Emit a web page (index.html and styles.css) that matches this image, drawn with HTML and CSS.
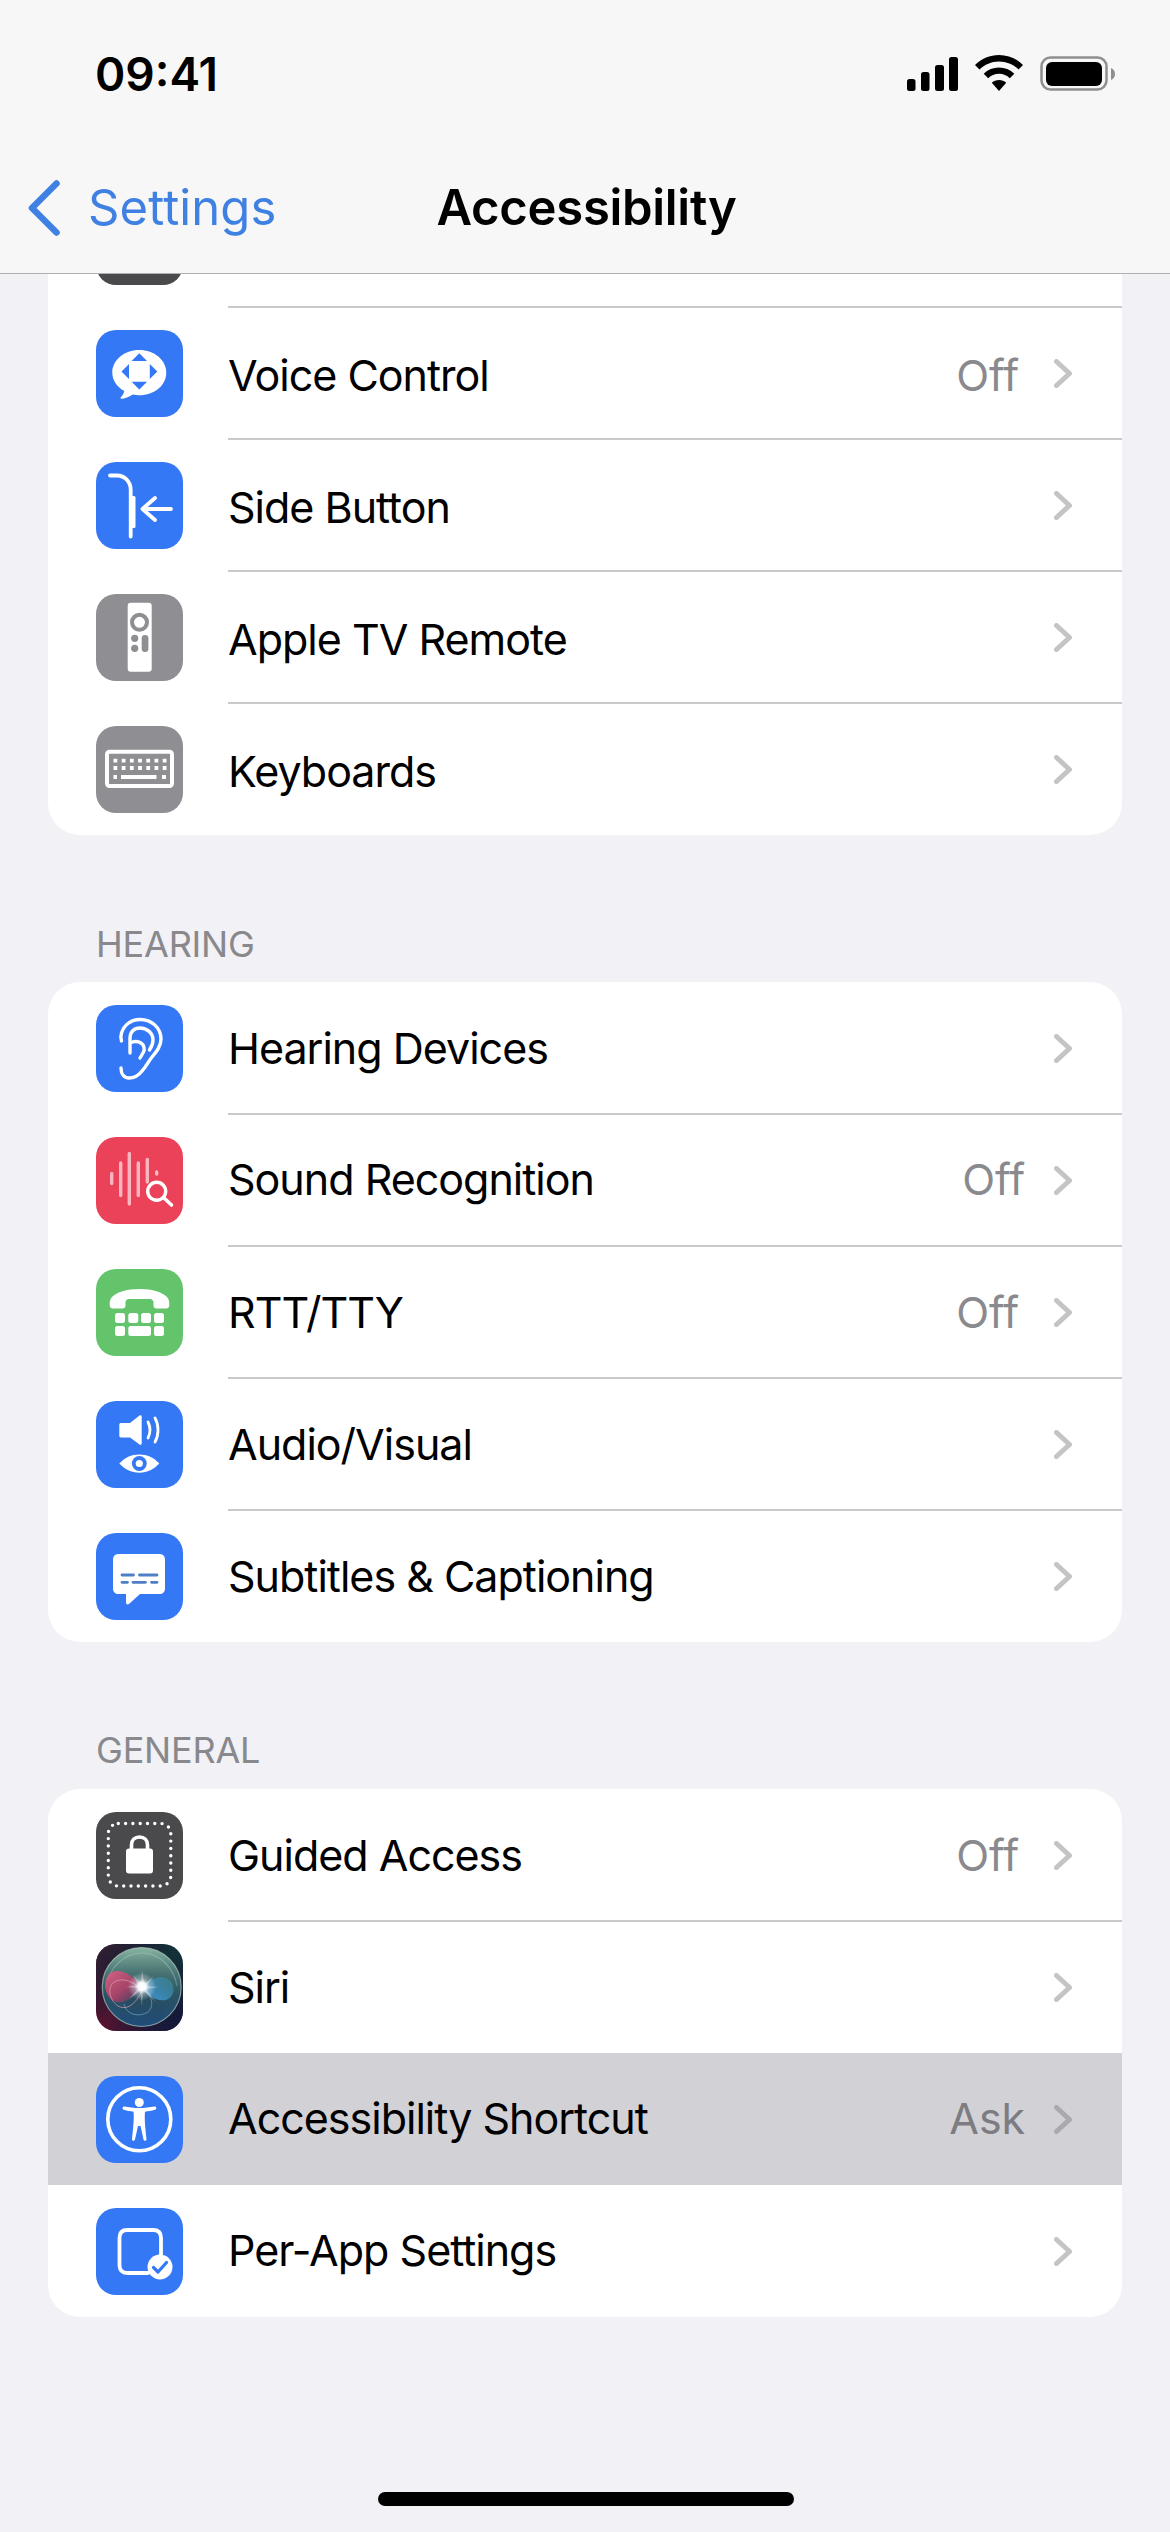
FILE: index.html
```html
<!DOCTYPE html>
<html lang="en">
<head>
<meta charset="utf-8">
<title>Accessibility</title>
<link rel="stylesheet" href="styles.css">
</head>
<body>
<svg class="defs" width="0" height="0" aria-hidden="true">
  <defs>
    <symbol id="chev" viewBox="0 0 18 29"><path d="M2.500 2.500 15.500 14.500 2.500 26.500" fill="none" stroke="currentColor" stroke-width="5" stroke-linecap="round" stroke-linejoin="round"/></symbol>
    <radialGradient id="siriGlow"><stop offset="0" stop-color="#fff"/><stop offset=".28" stop-color="#fff" stop-opacity=".96"/><stop offset=".55" stop-color="#e6f0f6" stop-opacity=".4"/><stop offset="1" stop-color="#fff" stop-opacity="0"/></radialGradient>
    <linearGradient id="siriPink" x1="0" y1="0" x2="1" y2="1"><stop offset="0" stop-color="#d86384" stop-opacity=".95"/><stop offset=".55" stop-color="#b83f69" stop-opacity=".85"/><stop offset="1" stop-color="#6d3a66" stop-opacity=".35"/></linearGradient>
    <linearGradient id="siriBlue" x1="1" y1="0" x2="0" y2="1"><stop offset="0" stop-color="#3d8c9e" stop-opacity=".55"/><stop offset="1" stop-color="#3f97e0" stop-opacity=".95"/></linearGradient>
    <radialGradient id="siriBall" cx=".5" cy=".5" r=".55"><stop offset="0" stop-color="#2b4a58"/><stop offset=".7" stop-color="#2d5560"/><stop offset="1" stop-color="#2a5a68"/></radialGradient>
    <linearGradient id="siriSheen" x1="0" y1="0" x2="0" y2="1"><stop offset="0" stop-color="#9cc7ae" stop-opacity=".85"/><stop offset=".5" stop-color="#5d9484" stop-opacity=".15"/><stop offset=".6" stop-color="#1a3f70" stop-opacity=".1"/><stop offset="1" stop-color="#1c4a80" stop-opacity=".8"/></linearGradient>
    <linearGradient id="siriBg" x1="0" y1="1" x2="1" y2="0"><stop offset="0" stop-color="#63102f"/><stop offset=".5" stop-color="#1a2230"/><stop offset="1" stop-color="#12363a"/></linearGradient>
    <linearGradient id="siriBg2" x1="1" y1="1" x2="0" y2="0"><stop offset="0" stop-color="#14173c"/><stop offset=".5" stop-color="#14173c" stop-opacity="0"/><stop offset="1" stop-color="#3a2030"/></linearGradient>
  </defs>
</svg>

<header class="top">
  <div class="status">
    <span class="time">09:41</span>
    <div class="status-icons">
      <svg class="signal" viewBox="0 0 51 34"><rect x="0" y="22" width="8.500" height="12" rx="2.500"/><rect x="14" y="15" width="8.500" height="19" rx="2.500"/><rect x="28" y="8" width="9" height="26" rx="2.500"/><rect x="42" y="0" width="9" height="34" rx="2.500"/></svg>
      <svg class="wifi" viewBox="0 0 48 36"><path d="M24 0C33 0 41.500 3.500 48 10L43.500 14.500C38.500 9.500 31.500 6.500 24 6.500S9.500 9.500 4.500 14.500L0 10C6.500 3.500 15 0 24 0ZM24 12.500C29.800 12.500 35.200 14.700 39.300 18.700L34.800 23.200C32 20.400 28.100 18.800 24 18.800S16 20.400 13.200 23.200L8.700 18.700C12.800 14.700 18.200 12.500 24 12.500ZM24 25C26.800 25 29.300 26 31.200 27.800L24 36 16.800 27.800C18.700 26 21.200 25 24 25Z"/></svg>
      <svg class="battery" viewBox="0 0 75 35"><rect x="1.500" y="1.500" width="65" height="32" rx="9" fill="none" stroke="#8f8f91" stroke-width="2.500"/><rect x="6" y="6" width="56" height="24" rx="6"/><path d="M71 12C73.500 13 75 15 75 18S73.500 23 71 24Z" fill="#8f8f91"/></svg>
    </div>
  </div>
  <nav class="navbar">
    <div class="back">
      <svg class="back-chev" viewBox="0 0 32 56"><path d="M28.500 3.500 4 28 28.500 52.500" fill="none" stroke="currentColor" stroke-width="6.500" stroke-linecap="round" stroke-linejoin="round"/></svg>
      <span class="back-label">Settings</span>
    </div>
    <h1 class="title">Accessibility</h1>
  </nav>
</header>

<main class="list">
  <section class="card card-top">
    <div class="row">
      <span class="icon icon-dark"></span>
      <div class="row-body"></div>
    </div>
    <div class="row">
      <svg class="icon icon-blue" viewBox="0 0 87 87"><path fill="#fff" d="M43.300 20C58.300 20 70.300 30 70.300 42.700S58.300 65.200 43.300 65.200C41 65.200 38.800 65 36.700 64.500 33 67 28.500 68.800 25.500 68.800 24.500 68.800 24.300 67.800 25 67 26.500 65.500 27.800 63.500 28.300 61 21 57 16.300 50.300 16.300 42.700 16.300 30 28.300 20 43.300 20Z"/><path fill="#3478f6" d="M43.300 23.300 51 31H35.600ZM43.300 59.500 35.600 51.800H51ZM25.500 41.500 33 34V49ZM61.300 41.500 53.800 34V49Z"/></svg>
      <div class="row-body"><span class="label">Voice Control</span><span class="value">Off</span><svg class="chev"><use href="#chev"/></svg></div>
    </div>
    <div class="row">
      <svg class="icon icon-blue" viewBox="0 0 87 87"><path d="M14 13.500H21C29 13.500 34.700 20 34.700 28V74.500" fill="none" stroke="#fff" stroke-width="3.800" stroke-linecap="round"/><rect x="34" y="34" width="5.500" height="32" rx="1.500" fill="#fff"/><path d="M75 47H46.500M59 36 46.500 47 59 58" fill="none" stroke="#fff" stroke-width="3.800" stroke-linecap="round" stroke-linejoin="round"/></svg>
      <div class="row-body"><span class="label">Side Button</span><svg class="chev"><use href="#chev"/></svg></div>
    </div>
    <div class="row">
      <svg class="icon icon-gray" viewBox="0 0 87 87"><rect x="31.700" y="8.700" width="24" height="69" rx="3" fill="#fff"/><circle cx="43.500" cy="28.300" r="7.500" fill="none" stroke="#8e8e93" stroke-width="4"/><circle cx="38.700" cy="44.300" r="3.600" fill="#8e8e93"/><circle cx="38.700" cy="54.300" r="3.600" fill="#8e8e93"/><rect x="45.700" y="41" width="6.700" height="17" rx="3.300" fill="#8e8e93"/></svg>
      <div class="row-body"><span class="label">Apple TV Remote</span><svg class="chev"><use href="#chev"/></svg></div>
    </div>
    <div class="row">
      <svg class="icon icon-gray" viewBox="0 0 87 87"><rect x="11" y="25.700" width="65" height="34.300" rx="2.500" fill="none" stroke="#fff" stroke-width="4"/><path stroke="#fff" stroke-width="3.800" stroke-dasharray="3.800 4.400" d="M17.500 34.700H71M17.500 42H71"/><path stroke="#fff" stroke-width="3.800" d="M17.500 51H21M25 51H60.500M66 51H70"/></svg>
      <div class="row-body"><span class="label">Keyboards</span><svg class="chev"><use href="#chev"/></svg></div>
    </div>
  </section>

  <h2 class="section-label section-label-hearing">HEARING</h2>
  <section class="card">
    <div class="row">
      <svg class="icon icon-blue" viewBox="0 0 87 87"><path d="M25.500 36C24.500 33 24.500 31 25.500 28 28 20 35 14.500 44 14.500 56 14.500 65 23 65 34 65 41 61 46 56 52 52 57 50 62 46 66 43 70 38 73 33 73 28 73 25 69 25 63M34 48V33C34 27 38 23 44 23 51 23 57 28 57 35 57 39 55.500 42 53.500 45M34 38C38 36 42 36 45 38 48 40 49 44 47.500 47L44 53" fill="none" stroke="#fff" stroke-width="3.400" stroke-linecap="round" stroke-linejoin="round"/></svg>
      <div class="row-body"><span class="label">Hearing Devices</span><svg class="chev"><use href="#chev"/></svg></div>
    </div>
    <div class="row row-up">
      <svg class="icon icon-red" viewBox="0 0 87 87"><path d="M15.700 36.500V46.500M24.700 26V58.500M33.300 16.500V67M42.300 26V58.500M51.300 22.500V45M60.700 35V37" fill="none" stroke="#f9b6c0" stroke-width="3.400" stroke-linecap="round"/><circle cx="60.700" cy="54.300" r="9" fill="none" stroke="#fff" stroke-width="3.400"/><path d="M67.500 60.500 75.500 68" stroke="#fff" stroke-width="3.600" stroke-linecap="round"/></svg>
      <div class="row-body"><span class="label">Sound Recognition</span><span class="value value-near">Off</span><svg class="chev"><use href="#chev"/></svg></div>
    </div>
    <div class="row">
      <svg class="icon icon-green" viewBox="0 0 87 87"><path fill="#fff" d="M43.500 20C57 20 66 23 71 28 73 30 73.500 33 73.300 36.500 73.200 38.300 72 39.500 70 39.500H60.500C58.500 39.500 57.500 38.300 57.500 36.500V33.500C57.500 31.500 56.500 30.500 54.500 30H32.500C30.500 30.500 29.500 31.500 29.500 33.500V36.500C29.500 38.300 28.500 39.500 26.500 39.500H17C15 39.500 13.800 38.300 13.700 36.500 13.500 33 14 30 16 28 21 23 30 20 43.500 20Z"/><rect x="19" y="44" width="10" height="10" rx="2.500" fill="#fff"/><rect x="32.300" y="44" width="10" height="10" rx="2.500" fill="#fff"/><rect x="45" y="44" width="10" height="10" rx="2.500" fill="#fff"/><rect x="58" y="44" width="10" height="10" rx="2.500" fill="#fff"/><rect x="19" y="57" width="10" height="10" rx="2.500" fill="#fff"/><rect x="32.300" y="57" width="22.700" height="10" rx="2.500" fill="#fff"/><rect x="58" y="57" width="10" height="10" rx="2.500" fill="#fff"/></svg>
      <div class="row-body"><span class="label">RTT/TTY</span><span class="value">Off</span><svg class="chev"><use href="#chev"/></svg></div>
    </div>
    <div class="row">
      <svg class="icon icon-blue" viewBox="0 0 87 87"><path fill="#fff" d="M25 22H34L43.500 14.500C44.500 13.800 45.700 14.300 45.700 15.500V42.500C45.700 43.700 44.500 44.200 43.500 43.500L34 36.500H25C24 36.500 23.300 35.800 23.300 34.800V23.700C23.300 22.700 24 22 25 22Z"/><path d="M52 21C54.500 26 54.500 32 52 37M59 17C63 24 63 34 59 41" fill="none" stroke="#fff" stroke-width="2.800" stroke-linecap="round"/><path fill="#fff" d="M23.300 62.500C29 56.500 35 53.500 43.300 53.500S57.600 56.500 63.300 62.500C57.600 68.500 51.600 71.700 43.300 71.700S29 68.500 23.300 62.500Z"/><circle cx="43.300" cy="62.500" r="7.400" fill="#3478f6"/><circle cx="43.300" cy="62.500" r="3.600" fill="#fff"/></svg>
      <div class="row-body"><span class="label">Audio/Visual</span><svg class="chev"><use href="#chev"/></svg></div>
    </div>
    <div class="row">
      <svg class="icon icon-blue" viewBox="0 0 87 87"><path fill="#fff" d="M23 21H63C67 21 69 23 69 27V55C69 59 67 61 63 61H44L33.500 70.500C31.500 72.300 30 71.500 30 69V61H23C19 61 17 59 17 55V27C17 23 19 21 23 21Z"/><path d="M26 42H37.500M43.500 42H61M26 49.300H31.500M37 49.300H49.500M55.500 49.300H61" fill="none" stroke="#4f7fc6" stroke-width="2.800" stroke-linecap="round"/></svg>
      <div class="row-body"><span class="label">Subtitles &amp; Captioning</span><svg class="chev"><use href="#chev"/></svg></div>
    </div>
  </section>

  <h2 class="section-label">GENERAL</h2>
  <section class="card">
    <div class="row">
      <svg class="icon icon-dark" viewBox="0 0 87 87"><rect x="12.300" y="11.500" width="62.500" height="62.500" rx="10" fill="none" stroke="#fff" stroke-width="3.400" stroke-linecap="round" stroke-dasharray="0 7.300"/><rect x="30" y="36.500" width="27" height="25" rx="3" fill="#fff"/><path d="M35.500 38V33C35.500 28 39 25 43.500 25S51.500 28 51.500 33V38" fill="none" stroke="#fff" stroke-width="3.600"/></svg>
      <div class="row-body"><span class="label">Guided Access</span><span class="value">Off</span><svg class="chev"><use href="#chev"/></svg></div>
    </div>
    <div class="row row-plain">
      <svg class="icon" viewBox="0 0 87 87"><rect width="87" height="87" fill="url(#siriBg)"/><rect width="87" height="87" fill="url(#siriBg2)"/><circle cx="45.700" cy="43" r="39.500" fill="url(#siriBall)"/><circle cx="45.700" cy="43" r="39.500" fill="url(#siriSheen)" stroke="#c6d8cf" stroke-opacity=".6" stroke-width="1.200"/><path fill="none" stroke="#d8e8e0" stroke-opacity=".3" stroke-width="1.200" d="M10 45C12 24 28 9 46 9S78 24 81 42"/><path fill="url(#siriPink)" d="M46 43C38 33 26 24 16 28 7 32 7 50 16 56 27 63 38 53 46 43Z"/><path fill="none" stroke="#f3a9bd" stroke-opacity=".6" stroke-width="1" d="M46 46C37 37 26 33 18 38 11 43 13 56 22 62 33 68 42 56 46 46Z"/><path fill="url(#siriBlue)" d="M46 43C53 36 62 31 70 34 80 38 80 53 70 56 60 58 52 51 46 43Z"/><path fill="none" stroke="#9edaf0" stroke-opacity=".45" stroke-width="1" d="M46 44C54 50 60 60 52 68 42 74 30 70 28 60"/><path fill="#fff" fill-opacity=".35" d="M46 26 48.500 40 58 32 50 42 63 43 50 45 60 58 47 46.500 46 62 44 47 33 55 42.500 44 30 43 42.500 41 37 31 45 39Z"/><circle cx="46" cy="42.500" r="14" fill="url(#siriGlow)"/></svg>
      <div class="row-body"><span class="label">Siri</span><svg class="chev"><use href="#chev"/></svg></div>
    </div>
    <div class="row row-active row-up">
      <svg class="icon icon-blue" viewBox="0 0 87 87"><circle cx="43.300" cy="43.300" r="31.500" fill="none" stroke="#fff" stroke-width="3.600"/><circle cx="43.300" cy="26.500" r="4.500" fill="#fff"/><path fill="#fff" d="M28.500 30.500C32.500 31.300 38 32 43.300 32S54 31.300 58.500 30.500C60.500 30.200 61 33.300 59 33.800 55.500 34.700 52 35.400 49 35.700 48.500 41 48.700 47 50.500 63 50.700 65 48 65.500 47.500 63.500L44.500 50H42L39 63.500C38.500 65.500 35.800 65 36 63 37.800 47 38 41 37.500 35.700 34.500 35.400 31 34.700 27.800 33.800 25.800 33.300 26.300 30.200 28.500 30.500Z"/></svg>
      <div class="row-body row-body-plain"><span class="label">Accessibility Shortcut</span><span class="value value-near">Ask</span><svg class="chev"><use href="#chev"/></svg></div>
    </div>
    <div class="row row-up">
      <svg class="icon icon-blue" viewBox="0 0 87 87"><path d="M52 65H31.300C26 65 23.500 62.500 23.500 57.300V29.700C23.500 24.500 26 22 31.300 22H57C62.500 22 65 24.500 65 29.700V47" fill="none" stroke="#fff" stroke-width="3.800" stroke-linecap="round"/><circle cx="64" cy="59" r="12.500" fill="#fff"/><path d="M57.500 59.500 62 64 70.500 54.500" fill="none" stroke="#3478f6" stroke-width="3.200" stroke-linecap="round" stroke-linejoin="round"/></svg>
      <div class="row-body"><span class="label">Per-App Settings</span><svg class="chev"><use href="#chev"/></svg></div>
    </div>
  </section>
</main>

<div class="home-indicator"></div>
</body>
</html>
```

FILE: styles.css
```css
* { box-sizing: border-box; }
html, body { margin: 0; padding: 0; }
body {
  width: 1170px;
  height: 2532px;
  overflow: hidden;
  position: relative;
  background: #f1f1f6;
  font-family: Inter, "Liberation Sans", sans-serif;
  color: #000;
}
.defs { position: absolute; }

.top {
  position: absolute;
  left: 0;
  top: 0;
  z-index: 2;
  width: 1170px;
  height: 274px;
  background: #f7f7f7;
  border-bottom: 1px solid #b0b0b2;
}
.status {
  height: 148px;
  padding: 55px 55px 0 95px;
  display: flex;
  justify-content: space-between;
  align-items: flex-start;
}
.time {
  font-size: 46px;
  font-weight: 600;
  line-height: 38px;
}
.status-icons {
  display: flex;
  align-items: flex-start;
  gap: 17px;
}
.signal { width: 51px; height: 34px; margin-top: 2px; }
.wifi { width: 48px; height: 36px; }
.battery { width: 75px; height: 35px; margin-top: 1px; }

.navbar {
  position: relative;
  height: 125px;
  display: flex;
  justify-content: center;
  align-items: flex-start;
}
.back {
  position: absolute;
  left: 28px;
  top: 30px;
  display: flex;
  align-items: center;
  gap: 28px;
  color: #3f80e3;
}
.back-chev { width: 32px; height: 56px; }
.back-label { font-size: 49px; letter-spacing: 0.1px; font-weight: 370; }
.title {
  margin: 32px 0 0;
  padding-left: 3px;
  font-size: 49px;
  line-height: 56px;
  font-weight: 600;
  letter-spacing: -0.3px;
}

.list {
  padding: 175px 48px 0;
}
.card {
  background: #fff;
  border-radius: 32px;
  overflow: hidden;
}
.section-label {
  margin: 0;
  height: 147px;
  padding: 88px 0 0 48px;
  font-size: 36px;
  line-height: 40px;
  font-weight: 370;
  letter-spacing: -0.2px;
  color: #88888d;
}
.section-label-hearing { padding-top: 89px; }
.row {
  height: 132px;
  display: flex;
  align-items: center;
  padding-left: 48px;
}
.icon {
  flex: none;
  display: block;
  width: 87px;
  height: 87px;
  border-radius: 20px;
  overflow: hidden;
}
.icon-blue { background: #3478f6; }
.icon-gray { background: #8e8e93; }
.icon-dark { background: #4a4a4c; }
.icon-red { background: #eb4159; }
.icon-green { background: #63c46b; }
.row-body {
  flex: 1;
  align-self: stretch;
  margin-left: 45px;
  padding-right: 50px;
  display: flex;
  align-items: center;
  box-shadow: 0 1px 0 #c9c9cb, inset 0 -1px 0 #c9c9cb;
}
.row:last-child .row-body,
.row-plain .row-body,
.row-body-plain { box-shadow: none; }
.row-active { background: #d1d1d6; }
.label {
  flex: 1;
  font-size: 43px;
  font-weight: 370;
  letter-spacing: -1px;
}
.card-top .label { padding-top: 4px; }
.row-up .label,
.row-up .value { padding-bottom: 3px; }
.value {
  font-size: 43px;
  font-weight: 370;
  letter-spacing: -0.1px;
  color: #8a8a8e;
  margin-right: 35px;
}
.card-top .value { padding-top: 4px; }
.value-near { margin-right: 29px; }
.chev {
  flex: none;
  width: 18px;
  height: 29px;
  color: #c4c4c7;
}
.row-active .chev { color: #a9a9ae; }
.row-active .value { color: #7c7c82; }

.home-indicator {
  position: absolute;
  left: 378px;
  top: 2492px;
  width: 416px;
  height: 14px;
  border-radius: 7px;
  background: #000;
}
```
